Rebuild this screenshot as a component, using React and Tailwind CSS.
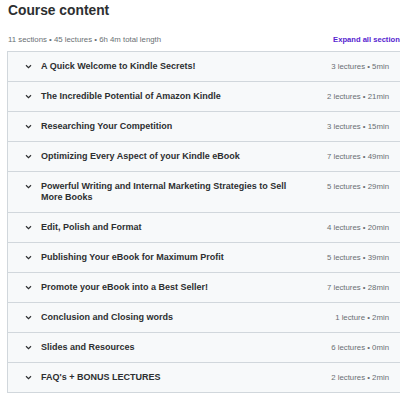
const sections = [
    { title: 'A Quick Welcome to Kindle Secrets!', meta: '3 lectures • 5min' },
    { title: 'The Incredible Potential of Amazon Kindle', meta: '2 lectures • 21min' },
    { title: 'Researching Your Competition', meta: '3 lectures • 15min' },
    { title: 'Optimizing Every Aspect of your Kindle eBook', meta: '7 lectures • 49min' },
    { title: 'Powerful Writing and Internal Marketing Strategies to Sell More Books', meta: '5 lectures • 29min' },
    { title: 'Edit, Polish and Format', meta: '4 lectures • 20min' },
    { title: 'Publishing Your eBook for Maximum Profit', meta: '5 lectures • 39min' },
    { title: 'Promote your eBook into a Best Seller!', meta: '7 lectures • 28min' },
    { title: 'Conclusion and Closing words', meta: '1 lecture • 2min' },
    { title: 'Slides and Resources', meta: '6 lectures • 0min' },
    { title: "FAQ's + BONUS LECTURES", meta: '2 lectures • 2min' },
];

const Chevron = () => (
    <svg width="7" height="5" viewBox="0 0 7 5" className="shrink-0">
        <path d="M1 1.2 L3.5 3.6 L6 1.2" fill="none" stroke="#2d2f31" strokeWidth="1.2" />
    </svg>
);

const SectionRow = ({ title, meta }) => (
    <div className="flex items-center justify-between border-t border-[#d1d7dc] bg-[#f7f9fa] pl-[17px] pr-[14px] py-[9px] min-h-[30px]">
        <div className="flex items-center gap-[9px]">
            <div className="self-start mt-[3px]"><Chevron /></div>
            <span className="text-[9px] leading-[11px] font-bold text-[#2d2f31] w-[258px]">{title}</span>
        </div>
        <span className="text-[7.8px] leading-[11px] text-[#6a6f73] self-start whitespace-nowrap">{meta}</span>
    </div>
);

export default function App() {
    return (
        <div className="w-[400px] h-[393px] overflow-hidden bg-white" style={{ fontFamily: '"Liberation Sans", Arial, sans-serif' }}>
            <div className="ml-[7px] w-[397px]">
                <h2 className="pl-[1px] pt-[3px] text-[13.8px] leading-[16px] font-bold text-[#2d2f31]">Course content</h2>
                <div className="flex items-center justify-between mt-[16px] mb-[6px] pl-[1px]">
                    <span className="text-[7.8px] leading-[10px] text-[#6a6f73]">11 sections • 45 lectures • 6h 4m total length</span>
                    <span className="text-[7.6px] leading-[10px] font-bold text-[#5624d0] whitespace-nowrap">Expand all sections</span>
                </div>
                <div className="border-x border-b border-[#d1d7dc]">
                    {sections.map((s) => (
                        <SectionRow key={s.title} title={s.title} meta={s.meta} />
                    ))}
                </div>
            </div>
        </div>
    );
}
